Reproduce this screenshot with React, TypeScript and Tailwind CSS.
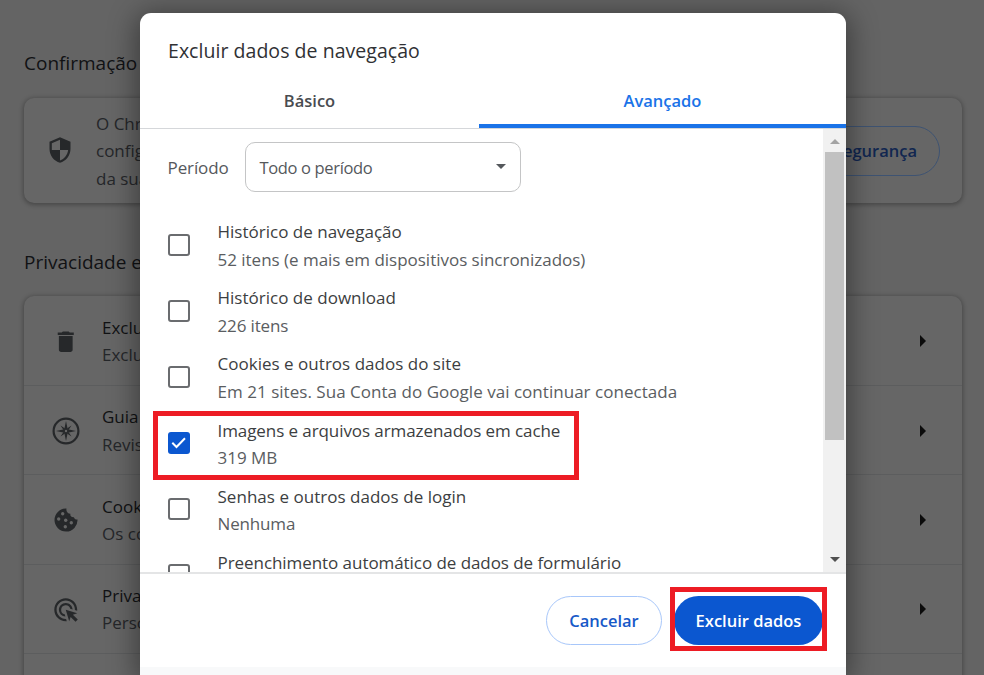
import React from 'react';
import { MdAdsClick, MdDelete, MdSecurity } from 'react-icons/md';
import clsx from 'clsx';

const CompassIcon = () => (
  <svg viewBox="0 0 28 28" className="h-7 w-7" fill="currentColor">
    <circle cx="14" cy="14" r="12.4" fill="none" stroke="currentColor" strokeWidth="2.2" />
    <path d="M14 4l1.700 8.300 8.300 1.700-8.300 1.700-1.700 8.300-1.700-8.300-8.300-1.700 8.300-1.700z" />
    <path d="M8.500 8.500l4.500 3-1.500 1.500zM19.500 8.500l-3 4.500-1.500-1.500zM8.500 19.500l3-4.500 1.500 1.500zM19.500 19.500l-4.500-3 1.500-1.500z" />
    <circle cx="14" cy="14" r="1.200" fill="#666666" />
  </svg>
);

const CookieIcon = () => (
  <svg viewBox="0 0 24 24" className="h-6 w-6">
    <path
      d="M12.500.6A11.500 11.500 0 1 0 23.500 11.500c-1.700.2-3.200-.6-3.600-2.300-2.300.3-4-1.200-3.500-3.500C13.600 5.500 11.900 3.200 12.500.6z"
      fill="currentColor"
    />
    <g fill="#666666">
      <circle cx="8.700" cy="5.800" r="1.700" />
      <circle cx="4.700" cy="11" r="1.700" />
      <circle cx="11.700" cy="12.300" r="1.700" />
      <circle cx="17.300" cy="14.700" r="1.700" />
      <circle cx="11.300" cy="18.700" r="1.700" />
    </g>
  </svg>
);

const settings = [
  { title: 'Exclu', text: 'Exclu', icon: <MdDelete size={27.5} /> },
  { title: 'Guia', text: 'Revis', icon: <CompassIcon /> },
  { title: 'Cook', text: 'Os co', icon: <CookieIcon /> },
  { title: 'Priva', text: 'Perso', icon: <MdAdsClick size={27.5} /> },
];

const options = [
  { title: 'Histórico de navegação', text: '52 itens (e mais em dispositivos sincronizados)', checked: false, titleClass: 'tracking-[0.01px]', textClass: 'tracking-[-0.02px]' },
  { title: 'Histórico de download', text: '226 itens', checked: false, titleClass: 'tracking-[0.01px]', textClass: 'tracking-[-0.14px]' },
  { title: 'Cookies e outros dados do site', text: 'Em 21 sites. Sua Conta do Google vai continuar conectada', checked: false, titleClass: 'tracking-[0.02px]', textClass: 'tracking-[0.03px]' },
  { title: 'Imagens e arquivos armazenados em cache', text: '319 MB', checked: true, titleClass: 'tracking-[-0.08px]', textClass: 'tracking-[0px]' },
  { title: 'Senhas e outros dados de login', text: 'Nenhuma', checked: false, titleClass: 'tracking-[0.03px]', textClass: 'tracking-[-0.15px]' },
  { title: 'Preenchimento automático de dados de formulário', text: '', checked: false, titleClass: 'tracking-[-0.06px]', textClass: '' },
];

const Checkbox = ({ checked }: { checked: boolean }) => (
  <span
    className={clsx(
      'mb-0.5 flex h-[22px] w-[22px] shrink-0 items-center justify-center rounded-[3px]',
      checked ? 'bg-[#0b57d0]' : 'border-2 border-[#6a6c6f]'
    )}
  >
    {checked && (
      <svg viewBox="0 0 22 22" className="h-[22px] w-[22px]" fill="none" stroke="white" strokeWidth="2">
        <path d="M4.300 10.800l4.200 4.200 8.500-8.700" />
      </svg>
    )}
  </span>
);

const SettingsPage = () => (
  <div className="h-full w-[986px] px-6 pt-[50px]">
    <h2 className="h-[27px] text-[19px] leading-[27px] text-[#111214]">Confirmação</h2>
    <div className="mt-[21px] flex h-[105px] items-center rounded-[10px] bg-[#666666] px-[22px] shadow-[0_1px_4px_1px_rgba(0,0,0,0.28)]">
      <MdSecurity size={28} className="mb-px shrink-0 text-[#26282a]" />
      <p className="ml-[22px] mt-px w-[140px] whitespace-nowrap text-[17px] leading-[27.5px] text-[#25272a]">
        O Chrome
        <br />
        config
        <br />
        da sua
      </p>
      <button className="ml-auto h-[50px] w-[230px] rounded-full border border-[#3e5372] pr-[22px] pt-0.5 text-right text-[16.5px] font-semibold text-[#112650]">
        segurança
      </button>
    </div>

    <h2 className="mt-[46px] h-[27px] text-[19px] leading-[27px] text-[#111214]">Privacidade e</h2>
    <div className="mt-[20px] h-[420px] rounded-t-[10px] bg-[#666666] pt-[0.6px] shadow-[0_1px_4px_1px_rgba(0,0,0,0.28)]">
      {settings.map((item) => (
        <div key={item.title} className="flex h-[89.4px] items-center border-b border-[#5c5d5e] pr-[36px] pt-px">
          <div className="flex w-[83px] shrink-0 justify-center text-[#26282a]">{item.icon}</div>
          <div className="-ml-[5px] w-[60px] whitespace-nowrap text-[17px] leading-[27.5px]">
            <p className="text-[#111214]">{item.title}</p>
            <p className="text-[#25272a]">{item.text}</p>
          </div>
          <svg viewBox="0 0 6 12" className="ml-auto h-3 w-1.5">
            <path d="M0 0l6 6-6 6z" fill="#0b0b0b" />
          </svg>
        </div>
      ))}
    </div>
  </div>
);

const Scrollbar = () => (
  <div className="flex w-[23px] shrink-0 flex-col items-center bg-[#f1f1f1]">
    <div className="flex h-[23px] shrink-0 items-center pt-0.5">
      <svg viewBox="0 0 10 5" className="h-[5px] w-[10px]">
        <path d="M0 5l5-5 5 5z" fill="#a3a3a3" />
      </svg>
    </div>
    <div className="h-[288px] w-[19px] shrink-0 bg-[#c1c1c1]" />
    <svg viewBox="0 0 10 5" className="mb-[10px] mt-auto h-[5px] w-[10px]">
      <path d="M0 0l5 5 5-5z" fill="#505050" />
    </svg>
  </div>
);

const ClearDataDialog = () => (
  <div className="absolute left-[140px] top-[13px] flex h-[662px] w-[706px] flex-col rounded-t-[11px] bg-white shadow-[0_4px_28px_4px_rgba(0,0,0,0.4)]">
    <h1 className="h-[63px] shrink-0 pl-7 pt-[24px] text-[19.5px] leading-[27px] tracking-[0.04px] text-[#303134]">
      Excluir dados de navegação
    </h1>
    <div className="flex h-[53px] shrink-0 border-b border-[#d5d7da] text-[16.5px] font-semibold">
      <button className="w-[339px] pb-0.5 text-[#494c50]">Básico</button>
      <button className="h-[52px] flex-1 border-b-4 border-[#1a73e8] pt-0.5 text-[#1a73e8]">Avançado</button>
    </div>

    <div className="flex h-[443px] shrink-0 overflow-hidden">
      <div className="flex-1 pl-[27.5px] pt-[13px]">
        <div className="flex h-[50px] items-center text-[17px] text-[#55585c]">
          <span className="w-[77px] pt-0.5 tracking-[-0.1px]">Período</span>
          <div className="flex h-[50px] w-[276px] items-center justify-between rounded-[10px] border border-[#c4c5c6] pl-[14px] pr-[14px]">
            <span className="pt-0.5 text-[16.5px] tracking-[-0.35px]">Todo o período</span>
            <svg viewBox="0 0 10 5" className="mb-[2px] h-[5px] w-[10px]">
              <path d="M0 0l5 5 5-5z" fill="#55585c" />
            </svg>
          </div>
        </div>
        <div className="mt-[26px] flex flex-col gap-[11.2px]">
          {options.map((option) => (
            <div key={option.title} className="flex h-[55px] shrink-0 items-center gap-7">
              <Checkbox checked={option.checked} />
              <div className="h-[55px] whitespace-nowrap text-[17px] leading-[27.5px]">
                <p className={clsx('text-[#3c3e41]', option.titleClass)}>{option.title}</p>
                <p className={clsx('text-[#5a5d61]', option.textClass)}>{option.text}</p>
              </div>
            </div>
          ))}
        </div>
      </div>
      <Scrollbar />
    </div>

    <div className="flex h-[95px] shrink-0 justify-end gap-3 border-t-2 border-[#e4e5e6] pr-[23px] pt-[22px] text-[16.5px] font-semibold">
      <button className="h-[49px] w-[116px] rounded-full border border-[#a8c7fa] pt-0.5 text-[#1759c8]">Cancelar</button>
      <button className="h-[49px] w-[149px] rounded-full bg-[#0b57d0] pt-0.5 text-white">Excluir dados</button>
    </div>
    <div className="flex-1 bg-[#f8f9fa]" />
  </div>
);

export default function App() {
  return (
    <div className="relative h-[675px] w-[984px] overflow-hidden bg-[#646464] font-['Open_Sans',sans-serif]">
      <SettingsPage />
      <ClearDataDialog />
      <div className="absolute left-[153px] top-[411px] h-[69px] w-[426px] border-[5px] border-[#ed1c24]" />
      <div className="absolute left-[670px] top-[587px] h-[64px] w-[157px] border-[5px] border-[#ed1c24]" />
    </div>
  );
}
